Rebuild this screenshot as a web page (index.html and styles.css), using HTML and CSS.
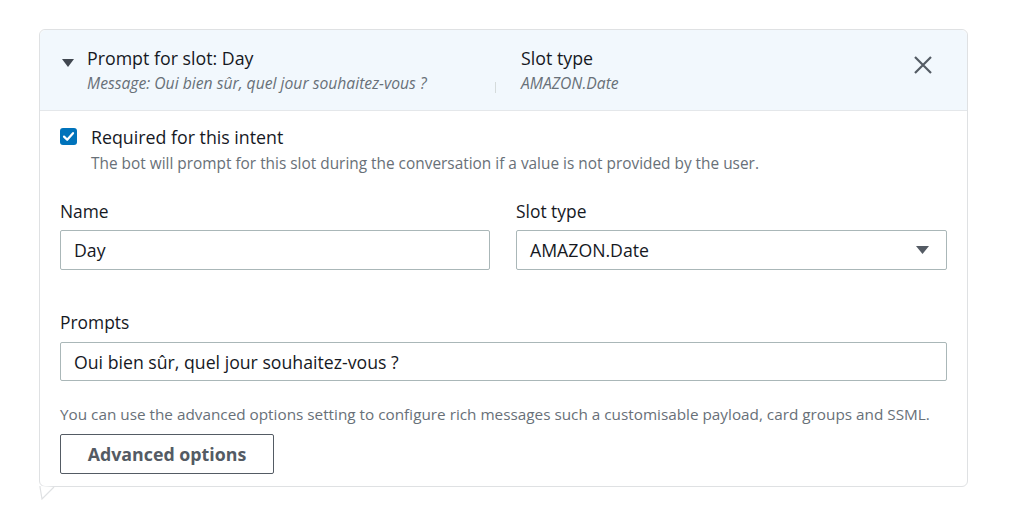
FILE: index.html
```html
<!DOCTYPE html>
<html lang="fr">
<head>
<meta charset="utf-8">
<title>Slot</title>
<link rel="stylesheet" href="styles.css">
</head>
<body>
<div class="page">
  <section class="card">
    <header class="card-head">
      <svg class="caret" width="12" height="10" viewBox="0 0 12 10"><path d="M0 1 L12 1 L6 9 Z" fill="#414750"/></svg>
      <div class="head-main">
        <div class="head-title">Prompt for slot: Day</div>
        <div class="head-sub">Message: Oui bien sûr, quel jour souhaitez-vous ?</div>
      </div>
      <div class="head-div"></div>
      <div class="head-type">
        <div class="head-title">Slot type</div>
        <div class="head-sub">AMAZON.Date</div>
      </div>
      <svg class="close" width="20" height="20" viewBox="0 0 20 20"><path d="M2 2 L18 18 M18 2 L2 18" stroke="#545b64" stroke-width="2.2" fill="none"/></svg>
    </header>
    <div class="card-body">
      <div class="check-row">
        <span class="checkbox"><svg width="17" height="17" viewBox="0 0 17 17"><rect x="0" y="0" width="17" height="17" rx="3" fill="#0073bb"/><path d="M4 8.6 L7.2 11.8 L13 5.2" stroke="#fff" stroke-width="2.2" fill="none" stroke-linecap="round" stroke-linejoin="round"/></svg></span>
        <div class="check-text">
          <div class="check-label">Required for this intent</div>
          <div class="check-desc">The bot will prompt for this slot during the conversation if a value is not provided by the user.</div>
        </div>
      </div>
      <div class="grid2">
        <div class="field">
          <div class="label">Name</div>
          <div class="input">Day</div>
        </div>
        <div class="field">
          <div class="label">Slot type</div>
          <div class="input select">AMAZON.Date<svg class="sel-caret" width="13" height="10" viewBox="0 0 13 10"><path d="M0 1 L13 1 L6.5 9 Z" fill="#545b64"/></svg></div>
        </div>
      </div>
      <div class="field prompts">
        <div class="label">Prompts</div>
        <div class="input">Oui bien sûr, quel jour souhaitez-vous ?</div>
      </div>
      <p class="help">You can use the advanced options setting to configure rich messages such a customisable payload, card groups and SSML.</p>
      <button class="btn">Advanced options</button>
    </div>
    <svg class="tail" width="26" height="14" viewBox="0 0 26 14"><path d="M1 0 L1 1 L3 13 L15 1" stroke="#dfe1e3" stroke-width="1.2" fill="#fff"/></svg>
  </section>
</div>
</body>
</html>
```
FILE: styles.css
```css
* { box-sizing: border-box; }
html, body { margin: 0; padding: 0; background: #fff; }
body { font-family: "Open Sans", "Noto Sans", sans-serif; color: #16191f; }
.page { padding: 29px 0 0 39px; width: 1024px; height: 507px; }
.card {
  position: relative;
  width: 929px;
  height: 458px;
  border: 1px solid #dfe1e3;
  border-radius: 6px;
  background: #fff;
}
.card-head {
  display: flex;
  align-items: flex-start;
  height: 81px;
  background: #f2f8fd;
  border-bottom: 1px solid #e4e7ea;
  border-radius: 6px 6px 0 0;
  padding: 17px 0 0 22px;
}
.caret { margin-top: 11px; margin-right: 13px; }
.head-main { width: 408px; }
.head-title { font-size: 17.8px; line-height: 22px; color: #16191f; white-space: nowrap; }
.head-sub { font-size: 15.7px; line-height: 20px; font-style: italic; color: #687078; margin-top: 4px; white-space: nowrap; }
.head-div { width: 1px; height: 11px; background: #d5dbdb; margin-top: 35px; margin-right: 25px; }
.head-type { flex: 1; }
.close { margin: 8px 34px 0 0; }
.card-body { padding: 15px 20px 0 20px; }
.check-row { display: flex; align-items: flex-start; }
.checkbox { display: block; width: 17px; height: 17px; margin: 2px 14px 0 0; }
.checkbox svg { display: block; }
.check-label { font-size: 17.8px; line-height: 22px; color: #16191f; }
.check-desc { font-size: 15.4px; line-height: 20px; color: #687078; margin-top: 6px; white-space: nowrap; }
.grid2 { display: grid; grid-template-columns: 430px 431px; column-gap: 26px; margin-top: 26px; }
.label { font-size: 17.4px; line-height: 22px; color: #16191f; margin-bottom: 8px; }
.input {
  height: 40px;
  border: 1px solid #aab7b8;
  border-radius: 2px;
  padding: 0 13px;
  display: flex;
  align-items: center;
  font-size: 17.7px;
  color: #16191f;
}
.select { justify-content: space-between; padding-right: 17px; }
.prompts { margin-top: 41px; width: 887px; }
.prompts .label { margin-bottom: 9px; }
.prompts .input { height: 39px; }
.help { margin: 23px 0 0; font-size: 15.3px; line-height: 20px; color: #687078; white-space: nowrap; }
.btn {
  display: block;
  margin-top: 10px;
  width: 214px;
  height: 40px;
  border: 1px solid #545b64;
  border-radius: 2px;
  background: #fff;
  font-family: "Open Sans", "Noto Sans", sans-serif;
  font-weight: 700;
  font-size: 17.8px;
  color: #545b64;
  padding: 0;
}
.tail { position: absolute; left: -1px; bottom: -14px; }
```
